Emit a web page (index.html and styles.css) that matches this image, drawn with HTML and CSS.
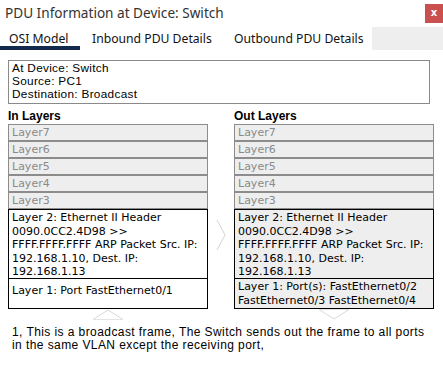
FILE: index.html
```html
<!DOCTYPE html>
<html>
<head>
<meta charset="utf-8">
<link rel="stylesheet" href="styles.css">
</head>
<body>
<div class="win">
  <div class="titlebar">
    <div class="title">PDU Information at Device: Switch</div>
    <div class="close">x</div>
  </div>
  <div class="tabs">
    <div class="tab active">OSI Model</div>
    <div class="tab t2">Inbound PDU Details</div>
    <div class="tab t3">Outbound PDU Details</div>
    <div class="filler"></div>
  </div>
  <div class="content">
    <div class="info">
      <div>At Device: Switch</div>
      <div>Source: PC1</div>
      <div>Destination: Broadcast</div>
    </div>
    <div class="cols">
      <div class="col">
        <div class="head">In Layers</div>
        <div class="layer dim">Layer7</div>
        <div class="layer dim">Layer6</div>
        <div class="layer dim">Layer5</div>
        <div class="layer dim">Layer4</div>
        <div class="layer dim">Layer3</div>
        <div class="layer act white l2">Layer 2: Ethernet II Header 0090.0CC2.4D98 &gt;&gt; FFFF.FFFF.FFFF ARP Packet Src. IP: 192.168.1.10, Dest. IP: 192.168.1.13</div>
        <div class="layer act white l1">Layer 1: Port FastEthernet0/1</div>
        <div class="arrow-wrap">
          <svg width="32" height="11" viewBox="0 0 32 11"><path d="M1 10.5 L16 1 L31 10.5" fill="none" stroke="#d8d8d8" stroke-width="1"/><path d="M1 10.5 H31" stroke="#e4e4e4"/></svg>
        </div>
      </div>
      <div class="mid">
        <svg width="10" height="32" viewBox="0 0 10 32"><path d="M1 1 L9 16 L1 31" fill="none" stroke="#d4d4d4" stroke-width="1"/></svg>
      </div>
      <div class="col">
        <div class="head">Out Layers</div>
        <div class="layer dim">Layer7</div>
        <div class="layer dim">Layer6</div>
        <div class="layer dim">Layer5</div>
        <div class="layer dim">Layer4</div>
        <div class="layer dim">Layer3</div>
        <div class="layer act l2">Layer 2: Ethernet II Header 0090.0CC2.4D98 &gt;&gt; FFFF.FFFF.FFFF ARP Packet Src. IP: 192.168.1.10, Dest. IP: 192.168.1.13</div>
        <div class="layer act l1">Layer 1: Port(s): FastEthernet0/2 FastEthernet0/3 FastEthernet0/4</div>
        <div class="arrow-wrap">
          <svg width="32" height="11" viewBox="0 0 32 11"><path d="M1 0.5 L16 10 L31 0.5" fill="none" stroke="#d8d8d8" stroke-width="1"/><path d="M1 0.5 H31" stroke="#e4e4e4"/></svg>
        </div>
      </div>
    </div>
    <div class="desc">1, This is a broadcast frame, The Switch sends out the frame to all ports in the same VLAN except the receiving port,</div>
  </div>
</div>
</body>
</html>
```
FILE: styles.css
```css
html, body {
  margin: 0;
  padding: 0;
  background: #ffffff;
}
.win {
  width: 443px;
  height: 387px;
  background: #fff;
  font-family: "Liberation Sans", Arial, sans-serif;
  color: #000;
}
.titlebar {
  height: 27px;
  display: flex;
  justify-content: space-between;
  align-items: flex-start;
}
.title {
  font-family: "Noto Sans", "Open Sans", sans-serif;
  font-size: 13.6px;
  color: #333;
  padding: 3px 0 0 5px;
  line-height: 20px;
}
.close {
  margin-top: 4px;
  width: 18px;
  height: 19px;
  background: #c9504e;
  color: #fff;
  font-family: "DejaVu Sans", sans-serif;
  font-weight: bold;
  font-size: 10px;
  line-height: 18px;
  text-align: center;
}
.tabs {
  display: flex;
  height: 23px;
}
.tab {
  font-family: "Noto Sans", "Open Sans", sans-serif;
  font-size: 12.2px;
  color: #111;
  line-height: 18px;
  padding-top: 3px;
  box-sizing: border-box;
  height: 23px;
}
.tab.active {
  width: 80px;
  padding-left: 9px;
  border-bottom: 4px solid #132a4d;
}
.tab.t2 {
  width: 142px;
  padding-left: 12px;
}
.tab.t3 {
  width: 150px;
  padding-left: 12px;
}
.filler {
  flex: 1;
  background: #eeeeee;
}
.content {
  padding: 10px 0 0 8px;
}
.info {
  width: 422px;
  box-sizing: border-box;
  border: 1px solid #8a8a8a;
  padding: 1px 0 2px 3px;
  font-size: 11.8px;
  letter-spacing: 0.3px;
  line-height: 13px;
}
.cols {
  display: flex;
  margin-top: 6px;
}
.col {
  width: 200px;
  display: flex;
  flex-direction: column;
}
.mid {
  width: 26px;
  display: flex;
  justify-content: center;
  padding-top: 109px;
  box-sizing: border-box;
}
.head {
  font-weight: bold;
  font-size: 12px;
  line-height: 13px;
  height: 14px;
}
.layer {
  box-sizing: border-box;
  background: #eeeeee;
  font-family: "DejaVu Sans", sans-serif;
  font-size: 11px;
  padding: 0 3px;
}
.layer.dim {
  height: 17px;
  line-height: 15px;
  color: #8a8a8a;
  border: 1px solid #8c8c8c;
}
.layer.act {
  border: 1px solid #000;
  color: #000;
  line-height: 13.6px;
  padding-top: 1px;
}
.layer.l2 {
  height: 70px;
}
.layer.l1 {
  border-top-width: 0;
  height: 30px;
  padding-top: 1px;
}
.layer.white {
  background: #fff;
}
.layer.white.l1 {
  padding-top: 5px;
}
.arrow-wrap {
  display: flex;
  justify-content: center;
  height: 11px;
}
.desc {
  margin-top: 6px;
  padding-left: 4px;
  width: 425px;
  font-size: 12px;
  letter-spacing: 0.42px;
  line-height: 13px;
  color: #000;
}
```
